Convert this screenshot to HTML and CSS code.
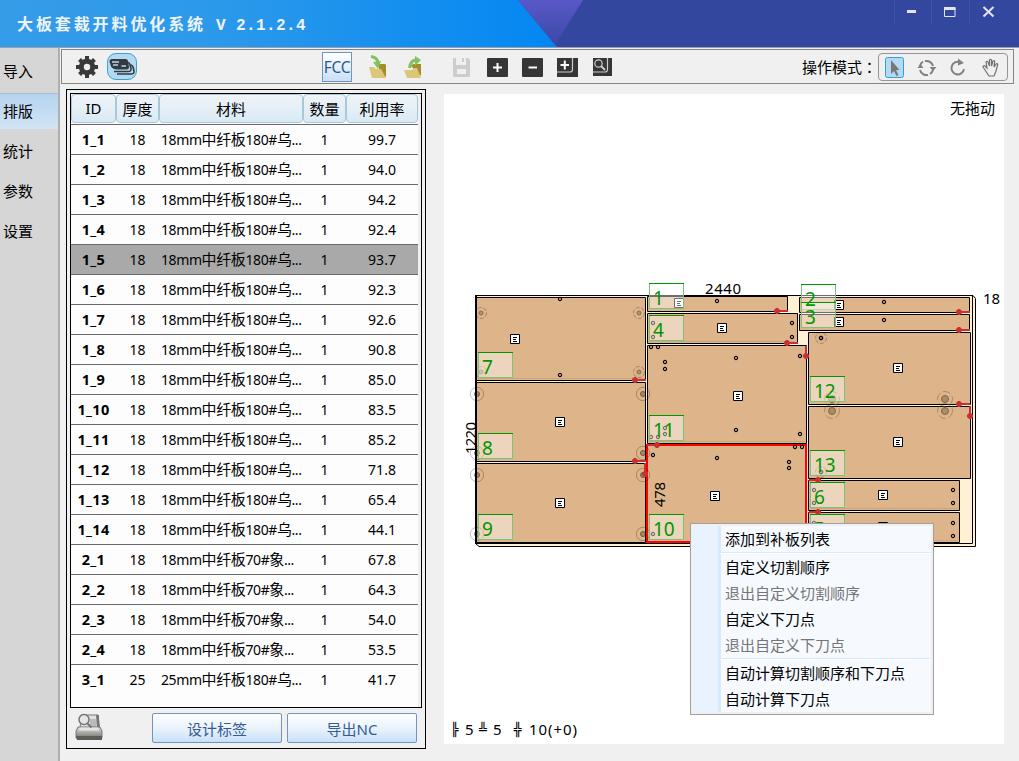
FILE: index.html
```html
<!DOCTYPE html>
<html lang="zh-CN">
<head>
<meta charset="utf-8">
<title>大板套裁开料优化系统</title>
<link rel="stylesheet" href="styles.css">
</head>
<body>
<div class="app">
  <header class="titlebar">
    <svg class="titlebar-art" width="1019" height="47" viewBox="0 0 1019 47" aria-hidden="true">
      <defs>
        <linearGradient id="sky"><stop offset="0" stop-color="#359ce8"/><stop offset=".4" stop-color="#2b99ea"/><stop offset="1" stop-color="#0387f3"/></linearGradient>
        <linearGradient id="violet" x1="0" x2="0" y1="0" y2="1"><stop offset="0" stop-color="#5a58c8"/><stop offset="1" stop-color="#3949a6"/></linearGradient>
      </defs>
      <path d="M0 0H1019V47H0z" fill="#34479f"/>
      <path d="M0 0H518L557 47H0z" fill="url(#sky)"/>
      <path d="M518 0H583L555 45z" fill="url(#violet)"/>
      <path d="M894.5 0V24M931.5 0V24M969.5 0V24" stroke="#4053a8"/>
      <path d="M907 10h9v3h-9z" fill="#e3e5f5"/>
      <path d="M944.5 8v8.500h10.500V8z" fill="none" stroke="#e3e5f5"/><path d="M944 7h11.500v3h-11.500z" fill="#e3e5f5"/>
      <path d="M983.500 7l10 9.500M993.500 7l-10 9.500" stroke="#e3e5f5" stroke-width="2"/>
    </svg>
    <h1 class="title">大板套裁开料优化系统<span class="version">&nbsp;V&nbsp;2.1.2.4</span></h1>
  </header>
  <div class="body">
    <nav class="sidebar">
      <a class="nav-item">导入</a>
      <a class="nav-item active">排版</a>
      <a class="nav-item">统计</a>
      <a class="nav-item">参数</a>
      <a class="nav-item">设置</a>
    </nav>
    <main class="main">
      <div class="toolbar">
        <svg class="gear" width="22" height="22" viewBox="0 0 22 22"><circle cx="11" cy="11" r="5.700" fill="none" stroke="#3a3a3a" stroke-width="5"/><g stroke="#3a3a3a" stroke-width="4"><path d="M11 0v5M11 17v5M0 11h5M17 11h5M3.500 3.500l3.500 3.500M15 15l3.500 3.500M18.500 3.500L15 7M7 15l-3.500 3.500"/></g></svg>
        <div class="cards"><svg width="28" height="25" viewBox="0 0 28 25"><g fill="none" stroke="#343a40" stroke-width="1.600"><path d="M9 20h14q3.500 0 3-3l-1-4q-.5-1.500-2-2"/><path d="M6 17.500h14q3.500 0 3-3l-1-4q-.5-1.500-2-2"/></g><path d="M3.500 5h14q2 0 2.500 2l1 6q0 2.500-2.500 2.500H9q-4 0-6-3L1.500 7.500Q1.300 5 3.500 5z" fill="#343a40"/><path d="M4 8h7M5 11h5M13.500 12h4.500" stroke="#b5d8f2" stroke-width="1.500"/></svg></div>
        <button class="fcc">FCC</button>
        <svg class="tools" width="250" height="28" viewBox="365 53 250 28">
          <path d="M379 64h6l1 1v12l-7-4zM411 66l2-2h8v12l-6-6z" fill="#a58c2c"/>
          <path d="M369 67h5l2 2h5l5 9h-14z" fill="#dbc777"/><path d="M404 70h8l2-2h3l4 10h-14z" fill="#dbc777"/>
          <path d="M371 56.500q7 1 7 7" fill="none" stroke="#83c35c" stroke-width="3"/><path d="M373 62l5 7 3-8z" fill="#83c35c"/>
          <path d="M409.500 68q1-8 7-8" fill="none" stroke="#83c35c" stroke-width="3"/><path d="M415 56l6 4-6 6z" fill="#83c35c"/>
          <path d="M453 58h3v7h10v-7h2l2 2v17h-17z" fill="#cdcdcd"/><path d="M457 69h9v5h-9z" fill="#f0f0f0"/><path d="M462 58h2v4h-2z" fill="#cdcdcd"/>
          <g fill="#363636"><rect x="487" y="58" width="21" height="19" rx="1"/><rect x="522" y="58" width="21" height="19" rx="1"/><path d="M557 58h21v19h-21zM593 58h19v18h-19z"/></g>
          <g stroke="#fff" stroke-width="2" fill="none"><path d="M493 67.500h9M497.500 63v9M528.500 67.500h8.500M560.500 65h8.500M564.800 60.500v9"/></g>
          <g stroke="#ccc" stroke-width="1.200" fill="none"><path d="M572.500 58v11.500q0 2.500-2.500 2.500h-13M607.500 58v11.500q0 2.500-2.500 2.500h-12"/><circle cx="598.500" cy="63.500" r="3.700"/><path d="M601 66l4 4" stroke-width="2"/></g>
        </svg>
        <span class="mode-label">操作模式<span class="colon">：</span></span>
        <div class="modes"><svg width="128" height="26" viewBox="879 53 128 26">
          <rect x="885.500" y="56.500" width="18" height="20" rx="2" fill="#b3d9f3" stroke="#31a0ce"/>
          <path d="M891 59v14l3-3 2.500 5 2-1-2.500-5h3.500z" fill="#777"/>
          <g fill="none" stroke="#808080" stroke-width="2"><path d="M920 65a7 7 0 0 1 3-4.500M925 60a7 7 0 0 1 8 5M933 69a7 7 0 0 1-3 4M928 74a7 7 0 0 1-8-5"/><path d="M960 61.200a6.300 6.300 0 1 0 4 7"/></g>
          <path d="M917.500 67h6l-3-4zM929.500 66h7l-3.500 4zM958 57.500v7l6-2.500z" fill="#808080"/>
          <path d="M987 72l-4-6q.5-2 2-1l2 2-1-6q1-1.500 2 0l1.500 4v-6q1-1.500 2 0v6l1.500-5q1-1 1.700 0l-.7 6 2-3q1.500-1 1.700.5L996 70l-2 5h-5z" fill="none" stroke="#707070" stroke-width="1.200"/>
        </svg></div>
      </div>
      <div class="work">
        <section class="panel">
          <div class="table">
            <div class="row head"><span>ID</span><span>厚度</span><span>材料</span><span>数量</span><span>利用率</span></div>
            <div class="row"><b>1_1</b><i>18</i><p>18mm<em>中纤板</em>180#<em>乌</em>...</p><i>1</i><i>99.7</i></div>
            <div class="row"><b>1_2</b><i>18</i><p>18mm<em>中纤板</em>180#<em>乌</em>...</p><i>1</i><i>94.0</i></div>
            <div class="row"><b>1_3</b><i>18</i><p>18mm<em>中纤板</em>180#<em>乌</em>...</p><i>1</i><i>94.2</i></div>
            <div class="row"><b>1_4</b><i>18</i><p>18mm<em>中纤板</em>180#<em>乌</em>...</p><i>1</i><i>92.4</i></div>
            <div class="row selected"><b>1_5</b><i>18</i><p>18mm<em>中纤板</em>180#<em>乌</em>...</p><i>1</i><i>93.7</i></div>
            <div class="row"><b>1_6</b><i>18</i><p>18mm<em>中纤板</em>180#<em>乌</em>...</p><i>1</i><i>92.3</i></div>
            <div class="row"><b>1_7</b><i>18</i><p>18mm<em>中纤板</em>180#<em>乌</em>...</p><i>1</i><i>92.6</i></div>
            <div class="row"><b>1_8</b><i>18</i><p>18mm<em>中纤板</em>180#<em>乌</em>...</p><i>1</i><i>90.8</i></div>
            <div class="row"><b>1_9</b><i>18</i><p>18mm<em>中纤板</em>180#<em>乌</em>...</p><i>1</i><i>85.0</i></div>
            <div class="row"><b>1_10</b><i>18</i><p>18mm<em>中纤板</em>180#<em>乌</em>...</p><i>1</i><i>83.5</i></div>
            <div class="row"><b>1_11</b><i>18</i><p>18mm<em>中纤板</em>180#<em>乌</em>...</p><i>1</i><i>85.2</i></div>
            <div class="row"><b>1_12</b><i>18</i><p>18mm<em>中纤板</em>180#<em>乌</em>...</p><i>1</i><i>71.8</i></div>
            <div class="row"><b>1_13</b><i>18</i><p>18mm<em>中纤板</em>180#<em>乌</em>...</p><i>1</i><i>65.4</i></div>
            <div class="row"><b>1_14</b><i>18</i><p>18mm<em>中纤板</em>180#<em>乌</em>...</p><i>1</i><i>44.1</i></div>
            <div class="row"><b>2_1</b><i>18</i><p>18mm<em>中纤板</em>70#<em>象</em>...</p><i>1</i><i>67.8</i></div>
            <div class="row"><b>2_2</b><i>18</i><p>18mm<em>中纤板</em>70#<em>象</em>...</p><i>1</i><i>64.3</i></div>
            <div class="row"><b>2_3</b><i>18</i><p>18mm<em>中纤板</em>70#<em>象</em>...</p><i>1</i><i>54.0</i></div>
            <div class="row"><b>2_4</b><i>18</i><p>18mm<em>中纤板</em>70#<em>象</em>...</p><i>1</i><i>53.5</i></div>
            <div class="row last"><b>3_1</b><i>25</i><p>25mm<em>中纤板</em>180#<em>乌</em>...</p><i>1</i><i>41.7</i></div>
          </div>
          <div class="panel-foot">
            <svg class="printer" width="30" height="30" viewBox="0 0 30 30"><defs><linearGradient id="metal" x1="0" x2="0" y1="0" y2="1"><stop offset="0" stop-color="#ddd"/><stop offset="1" stop-color="#77776f"/></linearGradient></defs><path d="M6 2h17l2 15H5z" fill="#e2e2e2" stroke="#777"/><path d="M15 6h6v9h-6z" fill="#bbb"/><path d="M21 2h3v14h-2z" fill="#777"/><path d="M3 14h22l2 4v7H1v-7z" fill="url(#metal)" stroke="#777"/><path d="M5 14.500h18l1 3H4z" fill="#e6e6e6"/><path d="M1 23h26v4H2z" fill="#5c5c55"/><circle cx="9" cy="6.500" r="5" fill="#e5e8e8" stroke="#777" stroke-width="1.500"/><path d="M12.500 10.500l4 4" stroke="#777" stroke-width="2"/></svg>
            <button class="btn">设计标签</button>
            <button class="btn">导出NC</button>
          </div>
        </section>
        <section class="stage">
          <svg class="layout" width="560" height="650" viewBox="444 94 560 650">
            <defs>
              <g id="mark"><path d="M-4.500-4.500h9v9h-9z" fill="#fff" stroke="#000"/><path d="M-2-1.500h4M-2 .5h3M-2 2.500h4" stroke="#000"/></g>
              <circle id="hole" r="1.600" fill="none" stroke="#000" stroke-width="1.100"/>
              <g id="dowel" fill="none" stroke="#000" opacity=".4"><circle r="5.500" stroke-dasharray="4 1.500" opacity=".65"/><circle r="2" fill="#665"/></g>
              <g id="cam" stroke="#000"><circle r="6.700" fill="none" opacity=".25"/><circle r="2.500" fill="#000" fill-opacity=".5" opacity=".5"/></g>
              <g id="cup"><circle r="7.500" fill="none" stroke="#7a6040" stroke-dasharray="8 3" opacity=".5"/><circle r="3.500" fill="#ab8c68" stroke="#80684c"/></g>
              <path id="tip" d="M-1-3H1L3-1V1L1 3H-1L-3 1V-1z" fill="#c93030"/>
              <g id="tag"><path d="M.5.5h34v25h-34z" fill="#fff" fill-opacity=".43" stroke="#78c478"/><path d="M0 .5h35" stroke="#009600"/></g>
            </defs>
            <path d="M475.500 295.500H973l2.500 3V546.500H479l-3.500-3z" fill="#fff1d4" stroke="#000"/>
            <path d="M972.500 296V543.500H476" fill="none" stroke="#000"/>
            <path d="M476 295V544" stroke="#000" stroke-width="2"/>
            <g fill="#deb58a" stroke="#000">
              <path d="M476.500 297.500h169v83h-169zM476.500 382.500h169v79h-169zM476.500 463.500h169v79h-169z"/>
              <path d="M647.500 296.500h140v15h-140zM647.500 313.500h150v30h-150zM647.500 345.500h159v98h-159z"/>
              <path d="M799.500 297.500h170v15h-170zM799.500 314.500h170v16h-170zM808.500 332.500h162v72h-162zM808.500 406.500h162v72h-162zM808.500 480.500h151v30h-151zM808.500 512.500h151v30h-151z"/>
            </g>
            <path d="M647 445h159v97h-159z" fill="#deb58a" stroke="#f00" stroke-width="2"/>
            <path d="M478 378.500h167M649 341.500h147M649 441.500h156M810 508.500h148M810 540.500h148" stroke="#c59f78" opacity=".7"/>
            <use href="#dowel" x="481" y="313"/><use href="#dowel" x="639" y="313"/><use href="#dowel" x="481" y="372"/><use href="#dowel" x="639" y="372"/>
            <use href="#cam" x="477" y="394"/><use href="#cam" x="643" y="394"/><use href="#cam" x="477" y="453"/><use href="#cam" x="643" y="453"/><use href="#cam" x="477" y="475"/><use href="#cam" x="643" y="475"/><use href="#cam" x="477" y="534"/><use href="#cam" x="643" y="534"/>
            <use href="#cup" x="832" y="399"/><use href="#cup" x="832" y="411"/><use href="#cup" x="945" y="399"/><use href="#cup" x="945" y="411"/>
            <use href="#dowel" x="821" y="338"/><use href="#dowel" x="821" y="472"/>
            <use href="#hole" x="560" y="299"/><use href="#hole" x="560" y="375"/><use href="#hole" x="717" y="301"/>
            <use href="#hole" x="792" y="323"/><use href="#hole" x="792" y="337"/><use href="#hole" x="653" y="323"/><use href="#hole" x="653" y="337"/>
            <use href="#hole" x="651" y="347"/><use href="#hole" x="658" y="347"/><use href="#hole" x="665" y="362"/><use href="#hole" x="665" y="369"/><use href="#hole" x="736" y="358"/><use href="#hole" x="800" y="356"/><use href="#hole" x="736" y="430"/><use href="#hole" x="800" y="434"/><use href="#hole" x="651" y="437"/><use href="#hole" x="658" y="437"/><use href="#hole" x="665" y="428"/><use href="#hole" x="665" y="434"/>
            <use href="#hole" x="653" y="455"/><use href="#hole" x="717" y="458"/><use href="#hole" x="789" y="462"/><use href="#hole" x="789" y="468"/><use href="#hole" x="795" y="447"/><use href="#hole" x="802" y="447"/><use href="#hole" x="653" y="534"/>
            <use href="#hole" x="884" y="302"/><use href="#hole" x="884" y="320"/><use href="#hole" x="821" y="338"/><use href="#hole" x="821" y="472"/>
            <use href="#hole" x="814" y="490"/><use href="#hole" x="814" y="503"/><use href="#hole" x="953" y="490"/><use href="#hole" x="953" y="503"/><use href="#hole" x="814" y="523"/><use href="#hole" x="953" y="523"/><use href="#hole" x="953" y="536"/>
            <use href="#mark" x="515" y="339"/><use href="#mark" x="560" y="422"/><use href="#mark" x="560" y="503"/><use href="#mark" x="679" y="303"/><use href="#mark" x="722" y="328"/><use href="#mark" x="738" y="396"/><use href="#mark" x="715" y="496"/><use href="#mark" x="839" y="305"/><use href="#mark" x="839" y="322"/><use href="#mark" x="898" y="368"/><use href="#mark" x="898" y="442"/><use href="#mark" x="883" y="495"/><use href="#mark" x="883" y="527"/>
            <path d="M635 380h11M635 461h11M645 463v11M777 311h11M787 343h11M806 346v10M647 445h10M959 312h11M959 330h11M959 404h11M970 406v10M809 480h9M809 512h9" stroke="#c93030" stroke-width="2"/>
            <use href="#tip" x="635" y="380"/><use href="#tip" x="635" y="461"/><use href="#tip" x="645" y="474"/><use href="#tip" x="777" y="311"/><use href="#tip" x="787" y="343"/><use href="#tip" x="806" y="356"/><use href="#tip" x="657" y="445"/><use href="#tip" x="959" y="312"/><use href="#tip" x="959" y="330"/><use href="#tip" x="959" y="404"/><use href="#tip" x="970" y="416"/><use href="#tip" x="818" y="480"/><use href="#tip" x="818" y="512"/>
            <use href="#tag" x="478" y="352"/><use href="#tag" x="478" y="433"/><use href="#tag" x="478" y="514"/><use href="#tag" x="649" y="283"/><use href="#tag" x="649" y="315"/><use href="#tag" x="649" y="415"/><use href="#tag" x="649" y="514"/><use href="#tag" x="801" y="284"/><use href="#tag" x="801" y="302"/><use href="#tag" x="810" y="376"/><use href="#tag" x="810" y="450"/><use href="#tag" x="810" y="482"/><use href="#tag" x="810" y="514"/>
            <g class="part-no">
              <text x="482" y="374">7</text><text x="482" y="455">8</text><text x="482" y="536">9</text>
              <text x="653" y="305">1</text><text x="653" y="337">4</text><text x="653" y="437">11</text><text x="653" y="536">10</text>
              <text x="805" y="306">2</text><text x="805" y="324">3</text><text x="814" y="398">12</text><text x="814" y="472">13</text><text x="814" y="504">6</text><text x="814" y="536">5</text>
            </g>
            <g class="dim">
              <text x="705" y="294" textLength="36">2440</text><text x="983" y="304">18</text>
              <text transform="translate(476 454) rotate(-90)" textLength="32">1220</text>
              <text transform="translate(665 507) rotate(-90)" textLength="25">478</text>
              <text x="465" y="735">5</text><text x="493" y="735">5</text><text x="529" y="735" textLength="48">10(+0)</text>
            </g>
            <g class="gap-mark"><text x="451" y="734">╠</text><text x="479" y="734">╩</text><text x="514" y="734">╬</text></g>
            <text class="hint" x="950" y="114">无拖动</text>
          </svg>
        </section>
      </div>
    </main>
  </div>
  <div class="menu">
    <div class="menu-body">
      <div class="menu-item">添加到补板列表</div>
      <div class="menu-sep"></div>
      <div class="menu-item">自定义切割顺序</div>
      <div class="menu-item disabled">退出自定义切割顺序</div>
      <div class="menu-item">自定义下刀点</div>
      <div class="menu-item disabled">退出自定义下刀点</div>
      <div class="menu-sep"></div>
      <div class="menu-item">自动计算切割顺序和下刀点</div>
      <div class="menu-item">自动计算下刀点</div>
    </div>
  </div>
</div>
</body>
</html>
```
FILE: styles.css
```css
* { box-sizing: border-box; }
body { margin: 0; font: 15px/20px "Noto Sans", "Noto Sans CJK SC", sans-serif; color: #000; }
.app { position: relative; width: 1019px; height: 761px; display: flex; flex-direction: column; overflow: hidden; background: #f0f0f0; }
.titlebar { position: relative; height: 47px; flex: none; }
.titlebar-art { position: absolute; inset: 0; }
.title { position: relative; margin: 0; padding: 12px 0 0 17px; font: bold 16px/22px "Noto Sans CJK SC", sans-serif; letter-spacing: 2.9px; color: #eef3f8; white-space: nowrap; }
.version { font: bold 16px/22px "Liberation Mono", monospace; letter-spacing: .4px; }
.body { flex: 1; display: flex; border-top: 1px solid #9a9fb0; }
.sidebar { width: 60px; padding-top: 5px; background: #d6d6d6; border-right: 2px solid #aeaeae; display: flex; flex-direction: column; gap: 4px; }
.nav-item { height: 36px; padding-left: 3px; font: 15px/35px "Noto Sans CJK SC", sans-serif; }
.nav-item.active { background: linear-gradient(#b5d3ee, #d3e5f6); border-top: 1px solid #9fbfd8; line-height: 33px; }
.main { flex: 1; min-width: 0; padding: 1px 5px 0 1px; }
.toolbar { height: 35px; border: 1px solid #858585; display: flex; align-items: center; }
.gear { margin-left: 14px; }
.cards { width: 30px; height: 27px; margin-left: 9px; border: 1px solid #3ba3cd; border-radius: 9px; background: #b3d9f3; }
.cards svg { display: block; }
.fcc { width: 30px; height: 30px; padding: 0; margin: 0 13px 0 185px; border: 1px solid #7195bd; background: linear-gradient(#fff, #c8e0f8); font: 15.500px "Noto Sans", sans-serif; letter-spacing: -.3px; color: #30588c; }
.mode-label { margin-left: 187px; width: 76px; flex: none; white-space: nowrap; font-family: "Noto Sans CJK SC", sans-serif; }
.colon { font-family: "Noto Sans CJK TC", sans-serif; }
.colon:lang(zh-CN) { font-feature-settings: "locl" 0; }
.modes { width: 130px; height: 28px; border: 1px solid #959595; border-radius: 4px; }
.modes svg { display: block; }
.work { display: flex; padding: 5px 0 0 5px; gap: 18px; align-items: flex-start; }
.panel { width: 360px; height: 660px; padding: 3px; border: 1px solid #000; flex: none; }
.table { width: 352px; height: 615px; padding-right: 3px; border: 1px solid #000; background: linear-gradient(to right, #fdfdfd 347px, #f0f0f0 347px); }
.row { display: grid; grid-template-columns: 45px 43px 144px 43px 72px; width: 347px; height: 30px; line-height: 29px; border-bottom: 1px solid #696969; text-align: center; font-size: 14px; }
.row.head { height: 31px; line-height: 29px; font: 15px/29px "Noto Sans CJK SC", sans-serif; }
.head span { height: 29px; background: linear-gradient(#eff4f8, #d9eaf4); border: 1px solid #aac7d8; border-radius: 4px; line-height: 27px; }
.head span:first-child { font-family: "Noto Sans", sans-serif; }
.row b { font-size: 14.500px; letter-spacing: .3px; }
.row i, .row em { font-style: normal; }
.row p { margin: 0; padding-left: 2px; text-align: left; white-space: nowrap; line-height: 30px; letter-spacing: -.4px; }
.row em { font: 15px/1 "Noto Sans CJK SC", sans-serif; }
.row.selected { background: #a9a9a9; }
.row.last { border-bottom: 0; }
.panel-foot { display: flex; gap: 5px; padding: 5px 4px 0 5px; }
.printer { margin-right: 42px; }
.btn { width: 130px; height: 30px; padding: 0; border: 1px solid #7195bd; border-radius: 2px; background: linear-gradient(#fff, #e4f0fc 60%, #c8e0f8); font: 15px "Noto Sans", "Noto Sans CJK SC", sans-serif; color: #365b91; }
.stage { width: 560px; height: 650px; margin-top: 5px; background: #fff; }
.layout { display: block; }
.part-no { font-size: 19px; fill: #009600; }
.dim { font-size: 15px; }
.gap-mark { font: 13px "DejaVu Sans Mono", monospace; }
.hint { font: 15px "Noto Sans CJK SC", sans-serif; }
.menu { position: absolute; left: 690px; top: 523px; width: 244px; height: 192px; padding: 2px; border: 1px solid #a0a0a0; background: #f0f0f0; }
.menu-body { height: 186px; padding-left: 27px; background: linear-gradient(to right, #e9f3ff 25px, #d5eaff 25px, #d5eaff 28px, #f6faff 28px); }
.menu-item { height: 26px; padding-left: 5px; font: 15px/26px "Noto Sans CJK SC", sans-serif; }
.menu-item.disabled { color: #757575; }
.menu-sep { height: 2px; border-top: 1px solid #d5eaff; background: #fff; }
```
